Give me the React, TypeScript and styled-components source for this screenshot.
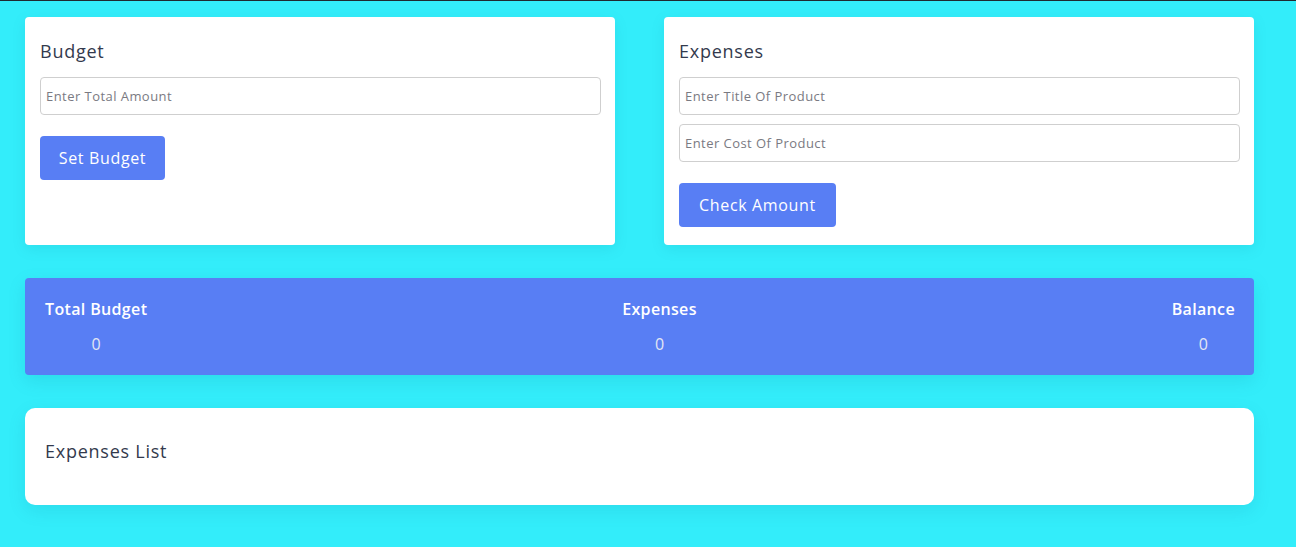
import React from "react";
import styled, { createGlobalStyle } from "styled-components";

const Global = createGlobalStyle`
  html, body { margin: 0; padding: 0; }
  body {
    background: #33edfa;
    border-top: 1px solid #1f2a30;
    font-family: "Open Sans", "Liberation Sans", sans-serif;
    min-height: 546px;
  }
  * { box-sizing: border-box; }
`;

const Page = styled.div`
  width: 1229px;
  margin-left: 25px;
  padding-top: 16px;
  display: flex;
  flex-direction: column;
  gap: 33px;
`;

const TopRow = styled.div`
  display: grid;
  grid-template-columns: 590px 590px;
  column-gap: 49px;
`;

const Card = styled.div`
  background: #fff;
  border-radius: 4px;
  height: 228px;
  padding: 21px 14px 0 15px;
  display: flex;
  flex-direction: column;
  box-shadow: 0 4px 14px rgba(0, 120, 140, 0.12);
`;

const Title = styled.h2`
  margin: 0 0 12px 0;
  font-size: 18px;
  font-weight: 500;
  line-height: 27px;
  letter-spacing: 0.75px;
  color: #333a4d;
`;

const Input = styled.input`
  height: 38px;
  width: 100%;
  border: 1px solid #cfcfcf;
  border-radius: 4px;
  padding: 0 5px;
  font-family: inherit;
  font-size: 13px;
  letter-spacing: 0.45px;
  color: #333;
  outline: none;
  margin-bottom: ${(p: { $mb?: number }) => p.$mb ?? 0}px;
  &::placeholder { color: #7a7a82; }
`;

const Button = styled.button`
  align-self: flex-start;
  height: 44px;
  width: ${(p: { $w: number }) => p.$w}px;
  padding: 0;
  border: none;
  border-radius: 4px;
  background: #587ef4;
  color: #fff;
  font-family: inherit;
  font-size: 16px;
  font-weight: 400;
  letter-spacing: 0.65px;
  margin-top: 21px;
  cursor: pointer;
`;

const Summary = styled.div`
  height: 97px;
  background: #587ef4;
  border-radius: 4px;
  padding: 20px 19px 0 20px;
  display: flex;
  justify-content: space-between;
  box-shadow: 0 6px 18px rgba(0, 110, 140, 0.14);
`;

const Stat = styled.div`
  display: flex;
  flex-direction: column;
  align-items: center;
  gap: 13px;
`;

const StatLabel = styled.div`
  font-size: 16px;
  font-weight: 600;
  line-height: 22px;
  letter-spacing: 0.35px;
  color: #fff;
`;

const StatValue = styled.div`
  font-size: 16px;
  line-height: 22px;
  color: #e3e6f3;
`;

const ListCard = styled.div`
  height: 97px;
  background: #fff;
  border-radius: 10px;
  padding: 30px 20px 0 20px;
  box-shadow: 0 6px 18px rgba(0, 110, 140, 0.12);
`;

const ListTitle = styled(Title)`
  margin: 0;
`;

export default function App() {
  return (
    <>
      <Global />
      <Page>
        <TopRow>
          <Card>
            <Title>Budget</Title>
            <Input placeholder="Enter Total Amount" />
            <Button $w={125}>Set Budget</Button>
          </Card>
          <Card>
            <Title>Expenses</Title>
            <Input placeholder="Enter Title Of Product" $mb={9} />
            <Input placeholder="Enter Cost Of Product" />
            <Button $w={157}>Check Amount</Button>
          </Card>
        </TopRow>
        <Summary>
          <Stat>
            <StatLabel>Total Budget</StatLabel>
            <StatValue>0</StatValue>
          </Stat>
          <Stat>
            <StatLabel>Expenses</StatLabel>
            <StatValue>0</StatValue>
          </Stat>
          <Stat>
            <StatLabel>Balance</StatLabel>
            <StatValue>0</StatValue>
          </Stat>
        </Summary>
        <ListCard>
          <ListTitle>Expenses List</ListTitle>
        </ListCard>
      </Page>
    </>
  );
}
